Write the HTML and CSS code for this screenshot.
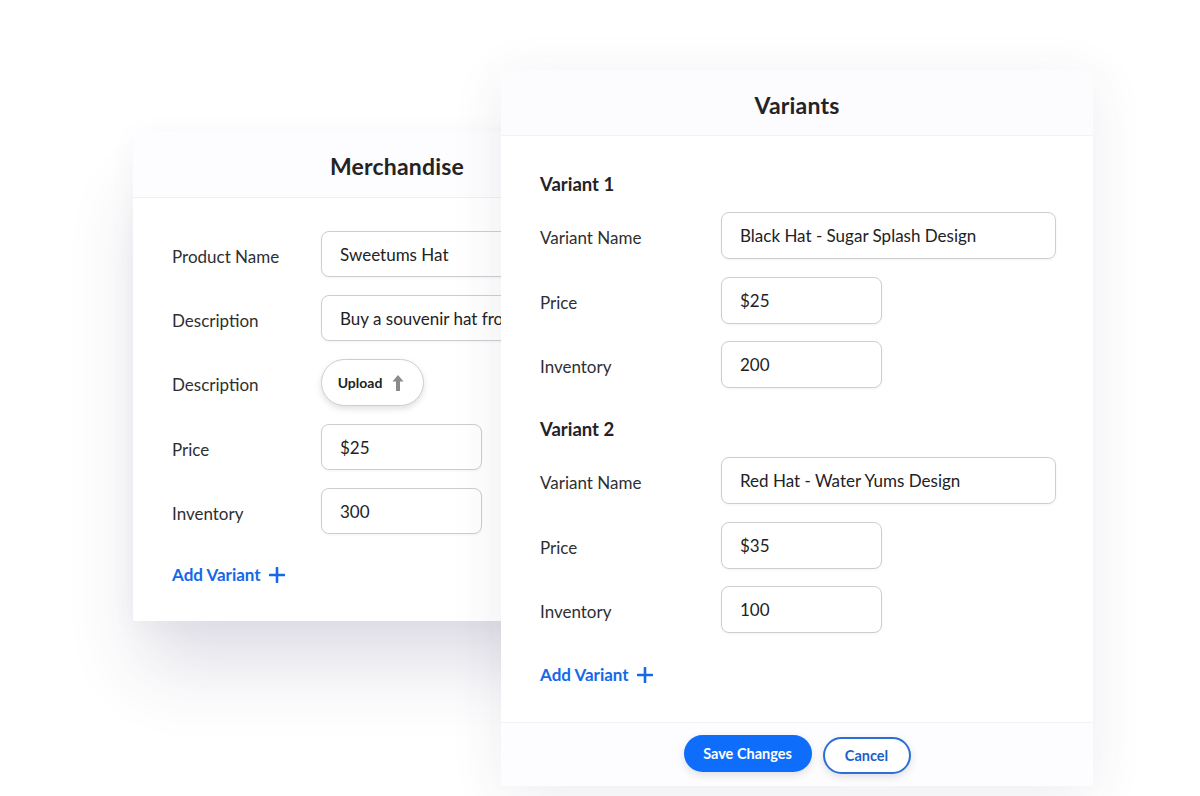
FILE: index.html
```html
<!DOCTYPE html>
<html lang="en">
<head>
<meta charset="utf-8">
<title>Merchandise Variants</title>
<link rel="stylesheet" href="styles.css">
</head>
<body>
<div class="stage">
  <section class="card merch">
    <header class="card-head"><h2>Merchandise</h2></header>
    <div class="card-body">
      <div class="form">
        <label class="lbl">Product Name</label>
        <div class="field wide">Sweetums Hat</div>
        <label class="lbl">Description</label>
        <div class="field wide">Buy a souvenir hat fro</div>
        <label class="lbl">Description</label>
        <div><button class="upload">Upload
          <svg width="14" height="18" viewBox="0 0 14 18"><path d="M7 1 L1.5 7.5 H5 V17 H9 V7.5 H12.5 Z" fill="#8a8a8f"/></svg>
        </button></div>
        <label class="lbl">Price</label>
        <div class="field short">$25</div>
        <label class="lbl">Inventory</label>
        <div class="field short">300</div>
      </div>
      <a class="add">Add Variant
        <svg width="16" height="16" viewBox="0 0 16 16"><path d="M8 1 V15 M1 8 H15" stroke="#1469e6" stroke-width="2.6" stroke-linecap="round"/></svg>
      </a>
    </div>
  </section>

  <section class="card variants">
    <header class="card-head"><h2>Variants</h2></header>
    <div class="card-body">
      <div class="group">
        <h3>Variant 1</h3>
        <div class="form vform">
          <label class="lbl">Variant Name</label>
          <div class="field vwide">Black Hat - Sugar Splash Design</div>
          <label class="lbl">Price</label>
          <div class="field short">$25</div>
          <label class="lbl">Inventory</label>
          <div class="field short">200</div>
        </div>
      </div>
      <div class="group">
        <h3>Variant 2</h3>
        <div class="form vform">
          <label class="lbl">Variant Name</label>
          <div class="field vwide">Red Hat - Water Yums Design</div>
          <label class="lbl">Price</label>
          <div class="field short">$35</div>
          <label class="lbl">Inventory</label>
          <div class="field short">100</div>
        </div>
      </div>
      <a class="add">Add Variant
        <svg width="16" height="16" viewBox="0 0 16 16"><path d="M8 1 V15 M1 8 H15" stroke="#1469e6" stroke-width="2.6" stroke-linecap="round"/></svg>
      </a>
    </div>
    <footer class="card-foot">
      <button class="btn save">Save Changes</button>
      <button class="btn cancel">Cancel</button>
    </footer>
  </section>
</div>
</body>
</html>
```

FILE: styles.css
```css
* { box-sizing: border-box; }
html, body { margin: 0; padding: 0; background: #ffffff; }
body {
  font-family: Lato, "Noto Sans", "Liberation Sans", sans-serif;
  color: #2a2a2e;
  width: 1200px;
  height: 796px;
  overflow: hidden;
}
.stage {
  position: relative;
  width: 1200px;
  height: 796px;
}
.card {
  position: absolute;
  background: #ffffff;
  display: flex;
  flex-direction: column;
}
.card-head {
  height: 66px;
  background: #fcfbfd;
  border-bottom: 1px solid #f3f1f6;
  display: flex;
  align-items: center;
  justify-content: center;
}
.card-head h2 {
  margin: 0;
  font-size: 23px;
  font-weight: 700;
  color: #232326;
  letter-spacing: 0.2px;
}
.merch {
  left: 133px;
  top: 132px;
  width: 528px;
  height: 489px;
  box-shadow: 0 55px 70px -10px rgba(60, 50, 100, 0.16), 0 4px 30px rgba(60, 50, 100, 0.04);
  border-radius: 2px;
}
.merch .card-head {
  background: #fdfcfe;
  border-bottom-color: #f1eff4;
}
.merch .card-head h2 { margin-top: 2px; }
.merch .card-body {
  padding: 33px 0 0 39px;
}
.form {
  display: grid;
  grid-template-columns: 149px auto;
  row-gap: 18px;
  align-items: center;
}
.lbl {
  font-size: 17px;
  color: #2f2f33;
  padding-top: 4px;
}
.field {
  height: 46px;
  border: 1.5px solid #cfcdd3;
  border-radius: 8px;
  background: #fff;
  box-shadow: 0 1px 3px rgba(0, 0, 0, 0.05);
  display: flex;
  align-items: center;
  padding-left: 18px;
  font-size: 17px;
  color: #222225;
  white-space: nowrap;
  overflow: hidden;
}
.wide { width: 182px; border-top-right-radius: 0; border-bottom-right-radius: 0; }
.short { width: 161px; }
.vwide { width: 335px; }
.upload {
  height: 47px;
  width: 103px;
  border-radius: 24px;
  border: 1.5px solid #cfcdd3;
  background: #fff;
  box-shadow: 0 3px 6px rgba(0, 0, 0, 0.12);
  font-family: inherit;
  font-size: 14px;
  font-weight: 700;
  color: #222;
  display: flex;
  align-items: center;
  justify-content: center;
  gap: 9px;
  padding: 0 4px 0 2px;
}
.add {
  display: inline-flex;
  align-items: center;
  gap: 8px;
  color: #1469e6;
  font-weight: 700;
  font-size: 17px;
  margin-top: 30px;
}
.variants {
  left: 501px;
  top: 70px;
  width: 592px;
  height: 716px;
  box-shadow: 0 10px 50px rgba(60, 50, 100, 0.09);
}
.variants .card-head { padding-top: 4px; }
.variants .card-body {
  flex: 1;
  padding: 36px 0 0 39px;
  display: flex;
  flex-direction: column;
}
.group { margin-bottom: 29px; }
.group h3 {
  margin: 0 0 16px 0;
  font-size: 18.5px;
  font-weight: 700;
  color: #232326;
  line-height: 24px;
}
.vform {
  grid-template-columns: 181px auto;
  row-gap: 17.5px;
}
.vform .field { height: 47px; }
.variants .add { margin-top: 2px; align-self: flex-start; }
.card-foot {
  height: 64px;
  background: #fdfcfe;
  border-top: 1px solid #f3f1f6;
  display: flex;
  align-items: center;
  justify-content: center;
  gap: 11px;
}
.btn {
  height: 37px;
  border-radius: 19px;
  font-family: inherit;
  font-size: 14.5px;
  font-weight: 700;
  box-shadow: 0 3px 8px rgba(0, 0, 0, 0.12);
}
.save {
  width: 128px;
  background: #0f6dfb;
  color: #fff;
  border: none;
  margin-top: -2px;
}
.cancel {
  width: 88px;
  background: #fff;
  color: #1c5fc8;
  border: 2px solid #2a6fd6;
  margin-top: 2px;
}
```
